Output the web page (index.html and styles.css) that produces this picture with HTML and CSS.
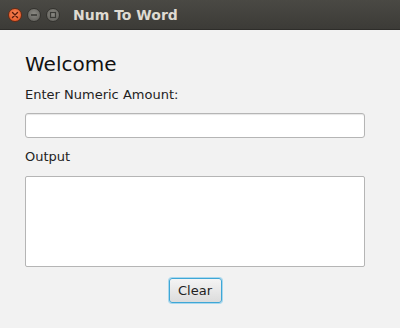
FILE: index.html
```html
<!DOCTYPE html>
<html lang="en">
<head>
    <meta charset="UTF-8">
    <title>Num To Word</title>
    <link rel="stylesheet" href="styles.css">
</head>
<body>
    <header class="titlebar">
        <div class="window-buttons">
            <span class="wbtn close">
                <svg width="8" height="8" viewBox="0 0 8 8"><path d="M1.5 1.5 L6.5 6.5 M6.5 1.5 L1.5 6.5" stroke="#5a1a0a" stroke-width="1.4" stroke-linecap="round"/></svg>
            </span>
            <span class="wbtn">
                <svg width="8" height="8" viewBox="0 0 8 8"><path d="M1 4 H7" stroke="#3a3a36" stroke-width="1.6"/></svg>
            </span>
            <span class="wbtn">
                <svg width="8" height="8" viewBox="0 0 8 8"><rect x="1.5" y="1.5" width="5" height="5" fill="none" stroke="#3a3a36" stroke-width="1.2"/></svg>
            </span>
        </div>
        <h1 class="title">Num To Word</h1>
    </header>

    <main class="content">
        <h2 class="welcome">Welcome</h2>
        <label class="field-label" for="amount">Enter Numeric Amount:</label>
        <input class="amount" id="amount" type="text">
        <label class="field-label output-label" for="output">Output</label>
        <textarea class="output" id="output"></textarea>
        <div class="actions">
            <button class="clear">Clear</button>
        </div>
    </main>
</body>
</html>
```

FILE: styles.css
```css
body {
    margin: 0;
    font-family: "DejaVu Sans", sans-serif;
    background: #f2f2f2;
    color: #222;
    width: 400px;
    height: 328px;
    overflow: hidden;
}
.titlebar {
    height: 29px;
    display: flex;
    align-items: center;
    background: linear-gradient(to bottom, #4a4944, #3c3b37);
    border-bottom: 1px solid #2e2d2a;
}
.window-buttons {
    display: flex;
    gap: 5px;
    margin-left: 8px;
}
.wbtn {
    width: 14px;
    height: 14px;
    border-radius: 50%;
    background: radial-gradient(circle at 50% 40%, #8a8983, #5c5b56);
    border: 1px solid #34332f;
    display: flex;
    align-items: center;
    justify-content: center;
    box-sizing: border-box;
}
.wbtn.close {
    background: radial-gradient(circle at 50% 40%, #f78a5c, #e24e1c);
    border-color: #6b2a12;
}
.title {
    margin: 0 0 0 13px;
    font-size: 14px;
    font-weight: bold;
    color: #dfdbd2;
}
.content {
    padding: 0 35px 0 25px;
    display: flex;
    flex-direction: column;
}
.welcome {
    margin: 22px 0 0;
    font-size: 20px;
    font-weight: normal;
    color: #111;
    line-height: 24px;
}
.field-label {
    font-size: 13px;
    color: #222;
    margin-top: 11px;
    line-height: 16px;
}
.amount {
    margin: 10px 0 0;
    height: 25px;
    box-sizing: border-box;
    border: 1px solid #b5b5b5;
    border-radius: 3px;
    background: #fff;
    box-shadow: inset 0 1px 1px #e6e6e6;
}
.output-label {
    margin-top: 11px;
}
.output {
    margin: 11px 0 0;
    height: 91px;
    box-sizing: border-box;
    border: 1px solid #b5b5b5;
    border-radius: 2px;
    background: #fff;
    resize: none;
}
.actions {
    display: flex;
    justify-content: center;
    margin-top: 11px;
}
.clear {
    width: 53px;
    height: 25px;
    font-family: "DejaVu Sans", sans-serif;
    font-size: 13px;
    color: #222;
    border: 1px solid #3fa7d6;
    border-radius: 3px;
    background: linear-gradient(to bottom, #f4f4f4, #dcdcdc);
    box-shadow: 0 0 0 1px #a9d8ee;
    padding: 0;
}
```
